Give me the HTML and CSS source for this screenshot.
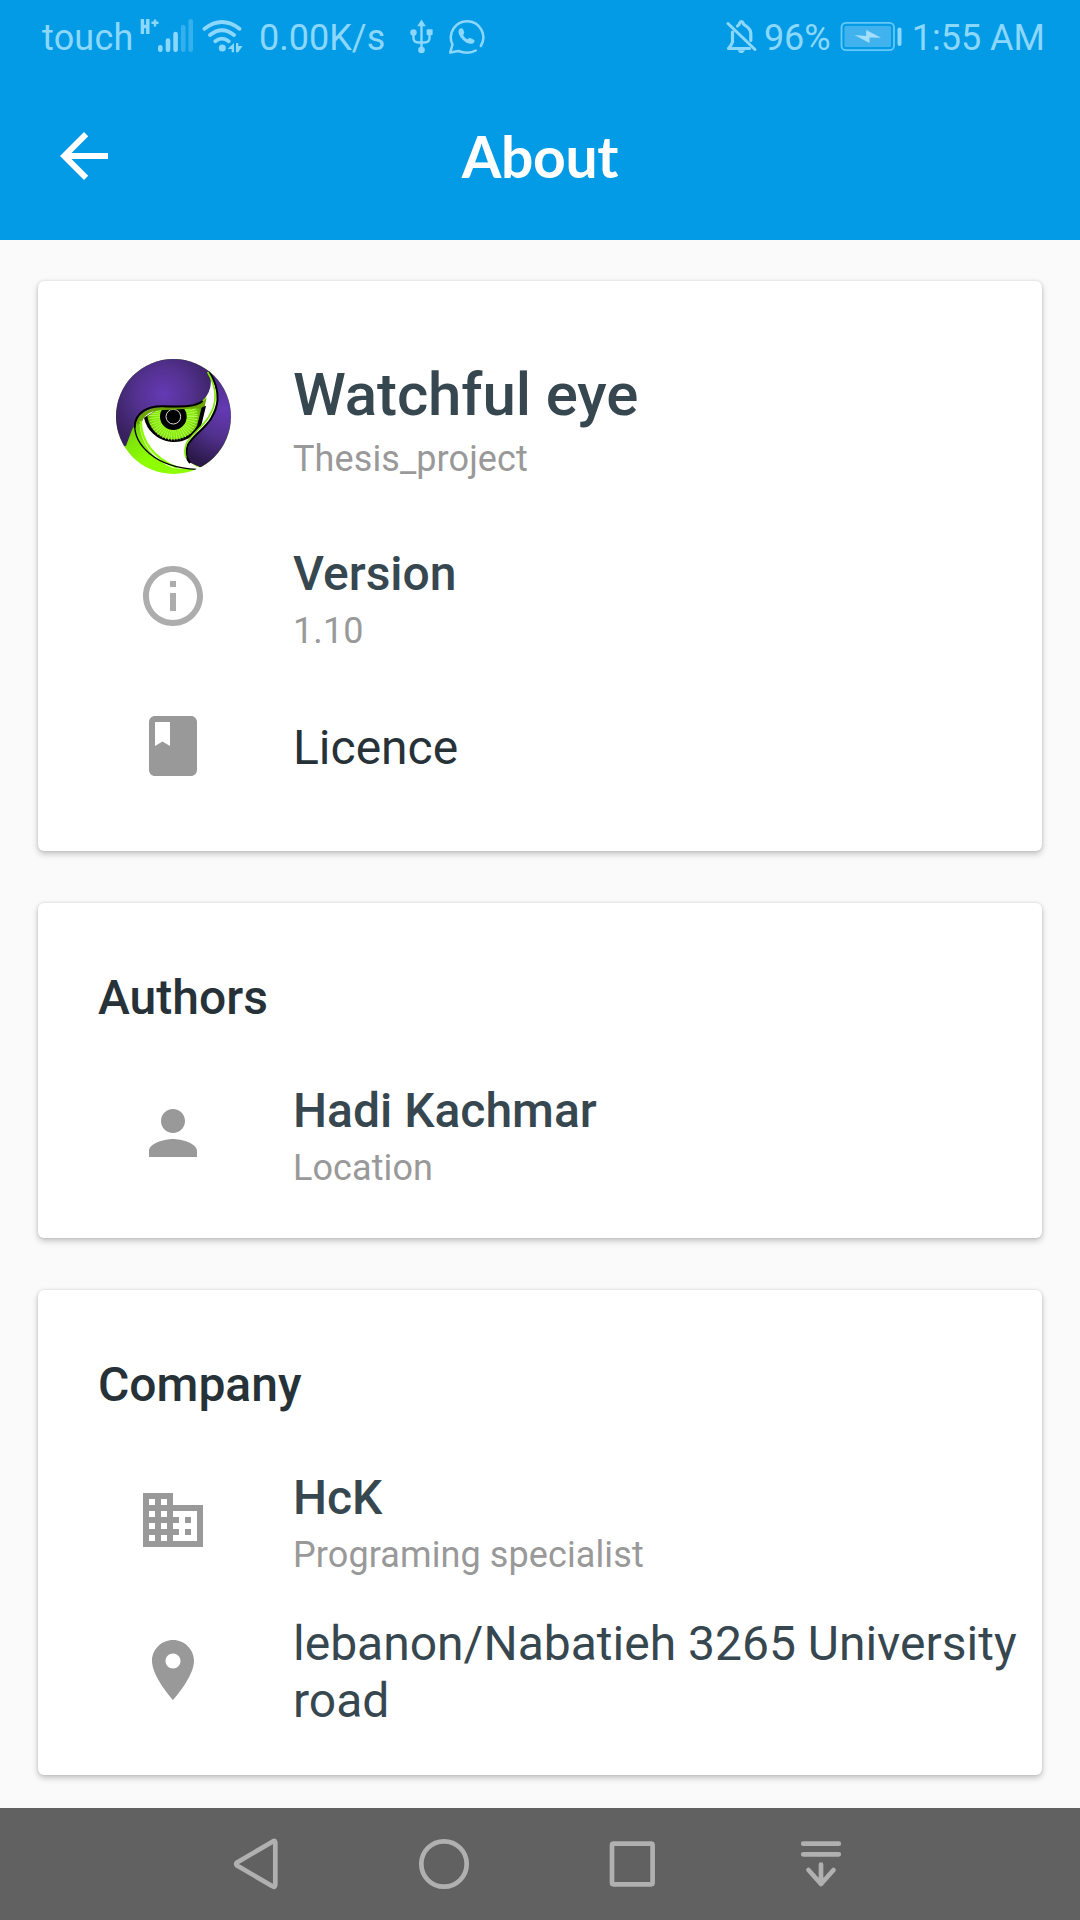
FILE: index.html
```html
<!DOCTYPE html>
<html lang="en">
<head>
<meta charset="utf-8">
<title>About</title>
<link rel="stylesheet" href="styles.css">
</head>
<body>
<header class="top">
  <div class="status">
    <span class="status-text carrier">touch</span>
    <svg class="signal" width="58" height="40" viewBox="137 16 58 40">
      <g fill="none" stroke="#8cd8fd" stroke-width="3.400"><path d="M142.400 19v15M147.800 19v15M142 26.500h6"/><path d="M151.500 22.800h7M155 19.500v7" stroke-width="2.400"/></g>
      <g stroke="#8cd8fd" stroke-width="4.600" stroke-linecap="round"><path d="M160.300 47.300v2.400M168 40.500v9.200M175.600 34v15.700"/><path d="M183.200 27v22.700M190.700 21.300v28.400" stroke="#35b0ef"/></g>
    </svg>
    <svg class="wifi" width="44" height="36" viewBox="200 18 44 36">
      <g fill="none" stroke="#8cd8fd" stroke-width="3.800" stroke-linecap="round"><path d="M204.500 28.800q17.500-13.600 35 0M210 35q12-9.600 24 0M215.300 41.300q6.700-5.300 13.400 0"/></g>
      <circle cx="222.300" cy="48" r="3.500" fill="#8cd8fd"/>
      <path d="M234 43v9.200h-2.300v-3.200h-4zM236 43h2.300v3h4.200l-4.200 6.200h-2.300z" fill="#8cd8fd"/>
    </svg>
    <span class="status-text rate">0.00K/s</span>
    <svg class="usb" width="26" height="36" viewBox="409 18 26 36">
      <g fill="none" stroke="#8cd8fd" stroke-width="2.400"><path d="M421.500 24v26M413.500 33v5q0 4.500 5 4.500h6q5 0 5-4.500v-5"/></g>
      <g fill="#8cd8fd"><path d="M421.500 19.500l4.300 6.800h-8.600z"/><circle cx="421.500" cy="50" r="3.300"/><circle cx="413.500" cy="32.500" r="3.200"/><rect x="426.600" y="29.300" width="6" height="6" rx="1"/></g>
    </svg>
    <svg class="chat" width="40" height="38" viewBox="447 17 40 38">
      <path d="M480.800 46A16.200 16.200 0 1 0 452.500 44.500L450.200 52.500 458.500 51Q468 54.500 475.800 50.500" fill="none" stroke="#8cd8fd" stroke-width="2.500" stroke-linecap="round" stroke-linejoin="round"/>
      <path d="M459 29.500q2.500-2.500 4.300 0l1 3.200q-.2 1.400-1.300 2.300 1.500 3 4.500 4.300l2.200-1.600 4.600 2.300q1 2.500-2.200 3.700-5 .7-9.600-4.200-5.300-5.500-3.500-10z" fill="#8cd8fd"/>
    </svg>
    <span class="status-space"></span>
    <svg class="bell" width="34" height="38" viewBox="726 17 34 38">
      <g fill="none" stroke="#8cd8fd" stroke-linecap="round" stroke-linejoin="round"><path d="M729 23.500l27 26" stroke-width="3"/><path d="M733.500 32v9.500q0 2-4 7h21M738.500 26q2.200-1.500 2.200-3 1.700-3 3.400 0 0 1.500 2.200 2.500 5.500 3.500 5.500 8v7" stroke-width="3.200"/></g>
      <path d="M738.800 50.300h7q-.8 2.800-3.500 2.800t-3.500-2.800z" fill="#8cd8fd"/>
    </svg>
    <span class="status-text percent">96%</span>
    <svg class="battery" width="64" height="32" viewBox="839 20 64 32">
      <rect x="841.500" y="22.800" width="52.500" height="27.400" rx="4.500" fill="none" stroke="#66c9f9" stroke-width="1.800"/>
      <rect x="844.500" y="26" width="46.500" height="21" rx="1.500" fill="#40b3ef"/>
      <path d="M897.500 29.500q0-2 2-2t2 2v14.500q0 2-2 2t-2-2z" fill="#8cd8fd"/>
      <path d="M854.500 35l11.500 1 .3-6 14.700 7.800-11.500-.3v5.500z" fill="#a3defb"/>
    </svg>
    <span class="status-text clock">1:55 AM</span>
  </div>
  <div class="toolbar">
    <svg class="back" width="72" height="72" viewBox="0 0 24 24"><path fill="#fff" d="M20 11H7.830l5.590-5.590L12 4l-8 8 8 8 1.410-1.410L7.830 13H20v-2z"/></svg>
    <h1 class="page-title">About</h1>
  </div>
</header>
<main class="content">
  <section class="card app">
    <div class="row row-app">
      <div class="icon-cell">
        <svg class="logo" width="115" height="115" viewBox="48 54 345 345">
          <defs>
            <clipPath id="disc"><circle cx="220.500" cy="226.500" r="172.500"/></clipPath>
            <radialGradient id="purple" gradientUnits="userSpaceOnUse" cx="190" cy="160" r="165"><stop offset="0" stop-color="#653ab5"/><stop offset=".5" stop-color="#53318f"/><stop offset="1" stop-color="#38215f"/></radialGradient>
            <radialGradient id="wing" gradientUnits="userSpaceOnUse" cx="375" cy="205" r="175"><stop offset="0" stop-color="#653ab5"/><stop offset=".5" stop-color="#50308c"/><stop offset="1" stop-color="#2b194a"/></radialGradient>
            <radialGradient id="iris" gradientUnits="userSpaceOnUse" cx="220" cy="226" r="88"><stop offset="0" stop-color="#8dff00"/><stop offset=".7" stop-color="#83e80c"/><stop offset="1" stop-color="#62a800"/></radialGradient>
            <linearGradient id="lid" x1="0" y1=".4" x2=".35" y2="1"><stop offset="0" stop-color="#5f9410"/><stop offset=".5" stop-color="#80e60a"/><stop offset=".8" stop-color="#8dff00"/></linearGradient>
          </defs>
          <g clip-path="url(#disc)">
            <rect x="48" y="54" width="345" height="345" fill="url(#lid)"/>
            <path d="M118 245Q134 206 190 203L310 188Q332 150 325 90L352 105 350 190 320 254 270 306Q252 340 266 360L300 385 220 382Q125 340 118 245z" fill="#fff"/>
            <path d="M132 230A92 92 0 0 0 304 253L318 195 180 200z" fill="#000"/>
            <path d="M142 225A80 80 0 0 0 291 255L306 194 180 201z" fill="url(#iris)"/>
            <circle cx="220" cy="226" r="56" fill="none" stroke="#d4ff80" stroke-width="33" stroke-dasharray="1.500 5.535"/>
            <circle cx="220" cy="227" r="40"/>
            <circle cx="220" cy="227" r="22" fill="none" stroke="#fff" stroke-width="2.500"/>
            <path d="M106 250Q112 203 180 198Q265 203 308 182L320 170 314 196 301 202 180 208Q132 212 124 250z" fill="#6da500"/>
            <path d="M122 240C124 302 162 350 230 380" fill="none" stroke="#8dff00" stroke-width="7"/>
            <path d="M104 250C102 310 165 380 290 385" fill="none" stroke="#000" stroke-width="4"/>
            <path d="M48 54H310L329 94Q342 148 307 179C270 207 193 188 145 206C110 222 104 247 78 315L48 320z" fill="url(#purple)"/>
            <path d="M104 260C103 213 146 194 190 196C250 197 285 198 308 180" fill="none" stroke="#000" stroke-width="6"/>
            <path d="M320 90Q375 165 337 228C318 260 280 286 264 312Q252 346 268 364L300 379 400 390 400 54z" fill="url(#wing)"/>
            <path d="M327 90C370 160 350 205 333 233C314 263 278 285 263 312Q252 344 270 366" fill="none" stroke="#000" stroke-width="6"/>
            <path d="M323 93C360 155 344 200 326 228C309 256 275 280 260 306Q251 329 258 350" fill="none" stroke="#80e60a" stroke-width="5"/>
            <path d="M286 390L292 376Q305 384 325 374L320 395z" fill="#fff"/>
          </g>
        </svg>
      </div>
      <div class="labels"><div class="app-name">Watchful eye</div><div class="sub">Thesis_project</div></div>
    </div>
    <div class="row row-version">
      <div class="icon-cell"><svg width="72" height="72" viewBox="0 0 24 24"><path fill="#adadad" d="M11 17h2v-6h-2v6zm1-15C6.480 2 2 6.480 2 12s4.480 10 10 10 10-4.480 10-10S17.520 2 12 2zm0 18c-4.410 0-8-3.590-8-8s3.590-8 8-8 8 3.590 8 8-3.590 8-8 8zM11 9h2V7h-2v2z"/></svg></div>
      <div class="labels"><div class="name">Version</div><div class="sub">1.10</div></div>
    </div>
    <div class="row row-licence">
      <div class="icon-cell"><svg width="72" height="72" viewBox="0 0 24 24"><path fill="#999" d="M18 2H6c-1.100 0-2 .9-2 2v16c0 1.100.9 2 2 2h12c1.100 0 2-.9 2-2V4c0-1.100-.9-2-2-2zM6 4h5v8l-2.500-1.500L6 12V4z"/></svg></div>
      <div class="labels"><div class="plain dark">Licence</div></div>
    </div>
  </section>

  <section class="card authors">
    <h2 class="heading">Authors</h2>
    <div class="row row-person">
      <div class="icon-cell"><svg width="72" height="72" viewBox="0 0 24 24"><path fill="#999" d="M12 12c2.210 0 4-1.790 4-4s-1.790-4-4-4-4 1.790-4 4 1.790 4 4 4zm0 2c-2.670 0-8 1.340-8 4v2h16v-2c0-2.660-5.330-4-8-4z"/></svg></div>
      <div class="labels"><div class="name">Hadi Kachmar</div><div class="sub">Location</div></div>
    </div>
  </section>

  <section class="card company">
    <h2 class="heading">Company</h2>
    <div class="row row-person">
      <div class="icon-cell"><svg width="72" height="72" viewBox="0 0 24 24"><path fill="#999" d="M12 7V3H2v18h20V7H12zM6 19H4v-2h2v2zm0-4H4v-2h2v2zm0-4H4V9h2v2zm0-4H4V5h2v2zm4 12H8v-2h2v2zm0-4H8v-2h2v2zm0-4H8V9h2v2zm0-4H8V5h2v2zm10 12h-8v-2h2v-2h-2v-2h2v-2h-2V9h8v10zm-2-8h-2v2h2v-2zm0 4h-2v2h2v-2z"/></svg></div>
      <div class="labels"><div class="name">HcK</div><div class="sub">Programing specialist</div></div>
    </div>
    <div class="row row-place">
      <div class="icon-cell"><svg width="72" height="72" viewBox="0 0 24 24"><path fill="#999" d="M12 2C8.130 2 5 5.130 5 9c0 5.250 7 13 7 13s7-7.750 7-13c0-3.870-3.130-7-7-7zm0 9.500c-1.380 0-2.500-1.120-2.500-2.500s1.120-2.500 2.500-2.500 2.500 1.120 2.500 2.500-1.120 2.500-2.500 2.500z"/></svg></div>
      <div class="labels"><div class="plain">lebanon/Nabatieh 3265 University road</div></div>
    </div>
  </section>
</main>
<nav class="navbar">
  <svg width="56" height="56" viewBox="0 0 56 56"><path d="M47.300 7.500Q47.300 3 44 6L9 26.500Q7.500 28 9 29.500L44 50Q47.300 52.500 47.300 48.500z"/></svg>
  <svg width="56" height="56" viewBox="0 0 56 56"><circle cx="28" cy="28" r="22.700"/></svg>
  <svg width="56" height="56" viewBox="0 0 56 56"><rect x="7" y="7.700" width="40.600" height="40.600" rx="1.500"/></svg>
  <svg width="56" height="56" viewBox="0 0 56 56"><path d="M10.200 7.700h35.600M10.200 18.300h35.600M28 28.500V48M15.500 34L28 48l12.500-14"/></svg>
</nav>
</body>
</html>
```
FILE: styles.css
```css
* { box-sizing: border-box; }
body {
  margin: 0;
  width: 1080px;
  height: 1920px;
  display: flex;
  flex-direction: column;
  background: #fafafa;
  font-family: Roboto, "Liberation Sans", sans-serif;
  overflow: hidden;
}
svg { display: block; flex: none; }
.top { height: 240px; flex: none; background: #039be5; }
.status { height: 72px; padding: 0 35px 0 42px; display: flex; align-items: center; color: #8cd8fd; }
.status-text { font-size: 36px; line-height: 42px; white-space: nowrap; padding-top: 4px; flex: none; }
.carrier { width: 95px; letter-spacing: .2px; }
.wifi { margin-left: 5px; }
.rate { margin-left: 15px; width: 150px; }
.chat { margin-left: 12px; }
.status-space { flex: 1; }
.percent { margin-left: 5px; }
.battery { margin-left: 8px; }
.clock { margin-left: 9px; }
.toolbar { height: 168px; padding: 0 48px; display: grid; grid-template-columns: 72px 1fr 72px; align-items: center; }
.page-title { margin: 0; text-align: center; color: #fff; font-family: Lato, Roboto, sans-serif; font-size: 57px; font-weight: 700; line-height: 78px; letter-spacing: -.3px; }
.content { flex: 1; padding: 41px 38px 33px; display: flex; flex-direction: column; gap: 52px; }
.card { background: #fff; border-radius: 6px; box-shadow: 0 3px 6px rgba(0, 0, 0, .22), 0 0 3px rgba(0, 0, 0, .13); }
.app { height: 570px; padding-top: 62px; }
.authors { height: 335px; padding-top: 67px; }
.company { height: 485px; padding-top: 67px; }
.heading { margin: 0 0 0 60px; font-size: 48px; font-weight: 500; line-height: 56px; color: #263238; }
.row { display: flex; align-items: center; }
.icon-cell { width: 270px; display: flex; justify-content: center; }
.logo { margin-left: 1px; }
.labels { flex: 1; margin-left: -15px; }
.app-name { font-size: 60px; font-weight: 500; line-height: 70px; letter-spacing: -.1px; color: #37474f; }
.name { font-size: 48px; font-weight: 500; line-height: 56px; color: #37474f; }
.sub { margin-top: 8px; font-size: 36px; line-height: 42px; letter-spacing: .1px; color: #999; }
.plain { font-size: 48px; line-height: 57px; color: #37474f; }
.dark { color: #263238; }
.row-app { height: 146px; }
.row-app .labels { padding-top: 8px; }
.row-version { height: 112px; margin-top: 51px; }
.row-version .labels, .row-person .labels { padding-top: 6px; }
.row-licence { height: 72px; margin-top: 58px; }
.row-licence .labels { padding-top: 2px; }
.row-person { height: 112px; margin-top: 51px; }
.row-place { height: 118px; margin-top: 35px; }
.row-place .labels { padding-top: 4px; }
.navbar { height: 112px; flex: none; padding: 0 231px 0 228px; display: flex; align-items: center; justify-content: space-between; background: #616161; }
.navbar svg { fill: none; stroke: #b0b0b0; stroke-width: 4.700px; stroke-linecap: round; stroke-linejoin: round; }
```
